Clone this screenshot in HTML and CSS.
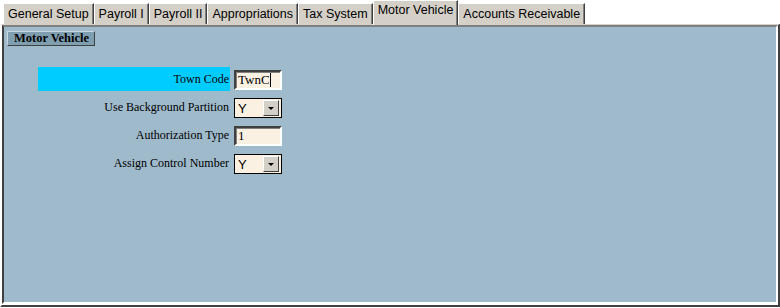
FILE: index.html
```html
<!DOCTYPE html>
<html lang="en">
<head>
  <meta charset="UTF-8">
  <title>Motor Vehicle Setup</title>
  <link rel="stylesheet" href="styles.css">
</head>
<body>
  <div class="tabs">
    <div class="tab">General Setup</div>
    <div class="tab">Payroll I</div>
    <div class="tab">Payroll II</div>
    <div class="tab">Appropriations</div>
    <div class="tab">Tax System</div>
    <div class="tab active">Motor Vehicle</div>
    <div class="tab">Accounts Receivable</div>
  </div>

  <div class="panel">
    <div class="panel-inner">
      <div class="section-title">Motor Vehicle</div>

      <div class="form">
        <div class="label focused">Town Code</div>
        <div class="field text-field">TwnC<span class="caret"></span></div>

        <div class="label">Use Background Partition</div>
        <div class="field select-field">
          <span class="value">Y</span>
          <span class="drop"><span class="arrow"></span></span>
        </div>

        <div class="label">Authorization Type</div>
        <div class="field text-field">1</div>

        <div class="label">Assign Control Number</div>
        <div class="field select-field">
          <span class="value">Y</span>
          <span class="drop"><span class="arrow"></span></span>
        </div>
      </div>
    </div>
  </div>
</body>
</html>
```

FILE: styles.css
```css
body {
  margin: 0;
  background-color: #ffffff;
  width: 780px;
  height: 308px;
  overflow: hidden;
}
.tabs {
  display: flex;
  align-items: flex-end;
  height: 24px;
  padding-left: 3px;
}
.tab {
  height: 20px;
  line-height: 21px;
  padding: 0 4px;
  background-color: #d4d0c8;
  border-top: 1px solid #ffffff;
  border-left: 1px solid #ffffff;
  border-right: 1px solid #404040;
  box-shadow: inset -1px 0 #808080;
  font-family: "Liberation Sans", Arial, sans-serif;
  font-size: 12.5px;
  color: #000;
  white-space: nowrap;
}
.tab.active {
  height: 24px;
  line-height: 19px;
  margin-bottom: -1px;
  position: relative;
  z-index: 1;
}
.panel {
  height: 280px;
  border-style: solid;
  border-width: 1px 2px 2px 2px;
  border-color: #d4d0c8 #404040 #404040 #ffffff;
}
.panel-inner {
  height: 274px;
  border-style: solid;
  border-width: 2px;
  border-color: #808080 #ffffff #ffffff #404040;
  background-color: #9fbacb;
  padding: 1px 2px 0 3px;
}
.section-title {
  display: inline-block;
  padding: 0 5px 0 6px;
  height: 13px;
  line-height: 13px;
  background-color: #7f9fb0;
  border: 1px solid;
  border-color: #c8d8e2 #404040 #404040 #c8d8e2;
  font-family: "Liberation Serif", "Times New Roman", serif;
  font-weight: bold;
  font-size: 12.5px;
  color: #000;
}
.form {
  display: grid;
  grid-template-columns: 192px 48px;
  grid-auto-rows: 24px;
  column-gap: 4px;
  row-gap: 4px;
  margin-top: 21px;
  margin-left: 31px;
}
.label {
  display: flex;
  align-items: center;
  justify-content: flex-end;
  padding-right: 1px;
  font-family: "Liberation Serif", "Times New Roman", serif;
  font-size: 12px;
  color: #000;
}
.label.focused {
  background-color: #00ccff;
}
.field {
  align-self: end;
  height: 16px;
  margin-bottom: 1px;
  background-color: #fbf1e3;
  border: 2px solid;
  border-color: #404040 #ffffff #ffffff #404040;
  box-shadow: inset 1px 1px #808080;
  display: flex;
  align-items: center;
}
.text-field {
  padding-left: 2px;
  font-family: "Liberation Serif", "Times New Roman", serif;
  font-size: 13px;
}
.caret {
  display: inline-block;
  width: 1px;
  height: 14px;
  background-color: #000;
}
.select-field {
  justify-content: space-between;
  padding-left: 3px;
  border-width: 1px;
  border-color: #000;
  box-shadow: none;
  height: 18px;
}
.select-field .value {
  font-family: "Liberation Sans", Arial, sans-serif;
  font-size: 13px;
}
.drop {
  width: 14px;
  height: 14px;
  margin-right: 2px;
  background-color: #d4d0c8;
  border: 1px solid;
  border-color: #ffffff #404040 #404040 #ffffff;
  display: flex;
  align-items: center;
  justify-content: center;
}
.arrow {
  width: 0;
  height: 0;
  border-left: 3px solid transparent;
  border-right: 3px solid transparent;
  border-top: 3px solid #000;
}
```
